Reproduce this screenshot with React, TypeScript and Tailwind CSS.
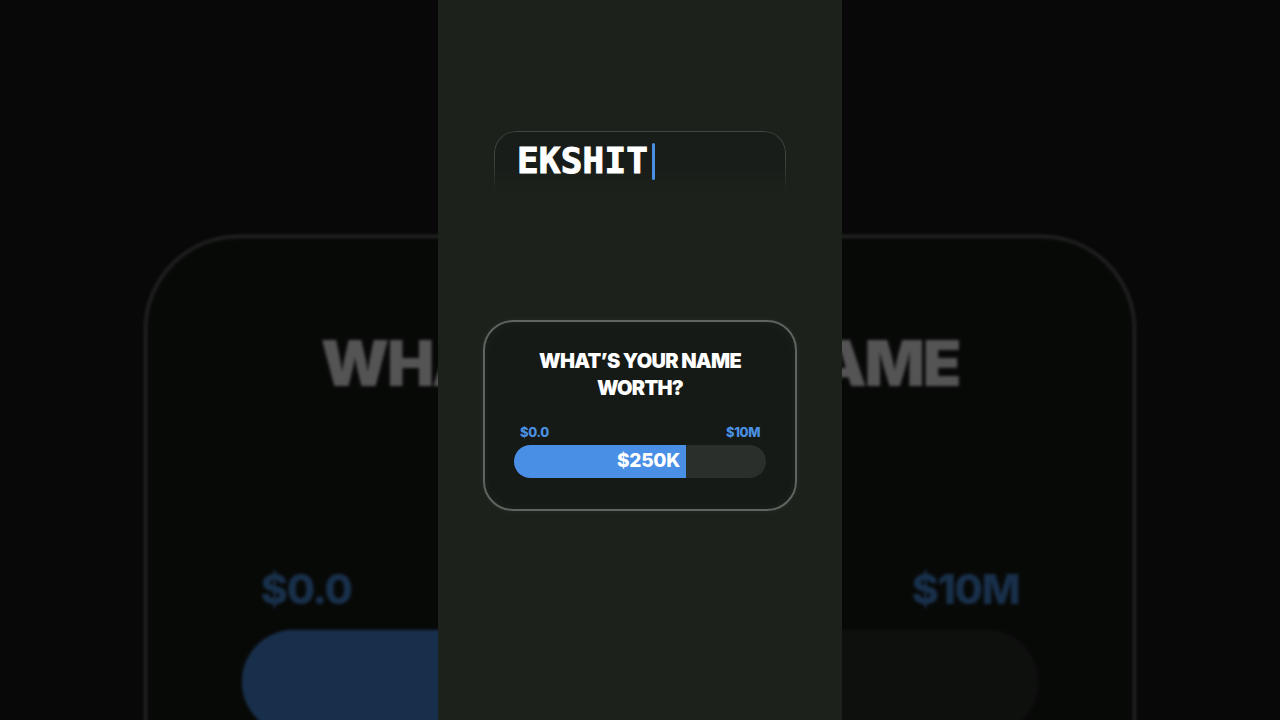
import React from "react";

function WorthCard({ ghost = false }: { ghost?: boolean }) {
  return (
    <div
      className={
        ghost
          ? "w-[314px] rounded-[30px] border border-[#6a6f6a] bg-[#161a16] px-[30px] pt-[27px] pb-[32px]"
          : "w-[314px] rounded-[30px] border-2 border-[#5f645f] bg-[#161a16] px-[29px] pt-[26px] pb-[31px] shadow-[inset_0_0_12px_rgba(255,255,255,0.04),0_0_6px_rgba(255,255,255,0.05)]"
      }
    >
      <div className="text-center text-[20px] leading-[27px] font-black tracking-[-0.7px] text-white [font-family:Inter,'Noto_Sans',sans-serif]">
        WHAT’S YOUR NAME
        <br />
        WORTH?
      </div>
      <div className="mt-[22px] flex justify-between px-[6px] text-[13px] leading-4 font-extrabold tracking-[-0.4px] text-[#4a90e2] [font-family:Inter,'Noto_Sans',sans-serif]">
        <span>$0.0</span>
        <span>$10M</span>
      </div>
      <div className="mt-[5px] flex h-[33px] w-full overflow-hidden rounded-full bg-[#2b2f2b]">
        <div className="flex h-full w-[68.3%] items-center justify-end bg-[#4a8fe6] pr-[6px]">
          <span className="text-[19px] font-extrabold tracking-[-0.2px] text-white [font-family:Inter,'Noto_Sans',sans-serif]">
            $250K
          </span>
        </div>
      </div>
    </div>
  );
}

export default function App() {
  return (
    <div className="relative h-[720px] w-[1280px] overflow-hidden bg-[#080808]">
      <div className="pointer-events-none absolute left-[483px] top-[441px] scale-[3.16] brightness-[0.33] blur-[0.5px]">
        <WorthCard ghost />
      </div>
      <div className="relative mx-auto flex h-full w-[404px] flex-col items-center bg-[#1c211c]">
        <div className="relative mt-[131px] h-[72px] w-[292px] pl-[23px] pt-[10px]">
          <div className="pointer-events-none absolute inset-0 rounded-t-[22px] border border-b-0 border-[#40453f] bg-[#191d19] [mask-image:linear-gradient(to_bottom,black_40%,transparent_85%)]" />
          <div className="relative flex h-[40px] items-center">
            <span className="text-[36px] leading-[40px] font-bold tracking-[0.2px] text-white [-webkit-text-stroke:1px_#ffffff] [font-family:'DejaVu_Sans_Mono','Liberation_Mono',monospace]">
              EKSHIT
            </span>
            <span className="ml-[4px] inline-block h-[37px] w-[3px] rounded-sm bg-[#4a90e2]" />
          </div>
        </div>
        <div className="mt-[117px]">
          <WorthCard />
        </div>
      </div>
    </div>
  );
}
